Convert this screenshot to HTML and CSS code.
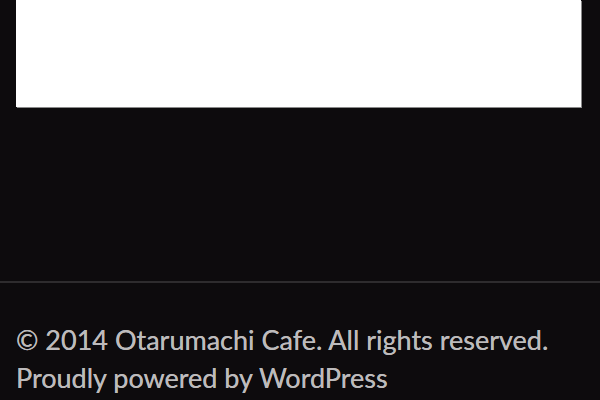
FILE: index.html
```html
<!DOCTYPE html>
<html lang="en">
<head>
<meta charset="utf-8">
<title>Otarumachi Cafe</title>
<link rel="stylesheet" href="styles.css">
</head>
<body>
  <main class="content">
    <div class="panel"></div>
  </main>
  <footer class="site-footer">
    <p class="site-info">© 2014 Otarumachi Cafe. All rights reserved.<br>Proudly powered by WordPress</p>
  </footer>
</body>
</html>
```

FILE: styles.css
```css
html, body {
  margin: 0;
  padding: 0;
  background: #0d0b0d;
  height: 400px;
  overflow: hidden;
}

.content {
  padding: 0 19px 0 16px;
  height: 281px;
}

.panel {
  background: #ffffff;
  height: 107px;
  box-shadow: 1px 1px 0 #8a8a8a;
}

.site-footer {
  border-top: 2px solid #2e2c2e;
  padding: 0 16px;
}

.site-info {
  margin: 38px 0 0;
  font-family: Lato, "Open Sans", sans-serif;
  font-size: 27px;
  line-height: 38px;
  color: #bdbbbc;
  text-shadow: 0 0 0.6px #bdbbbc;
}
```
